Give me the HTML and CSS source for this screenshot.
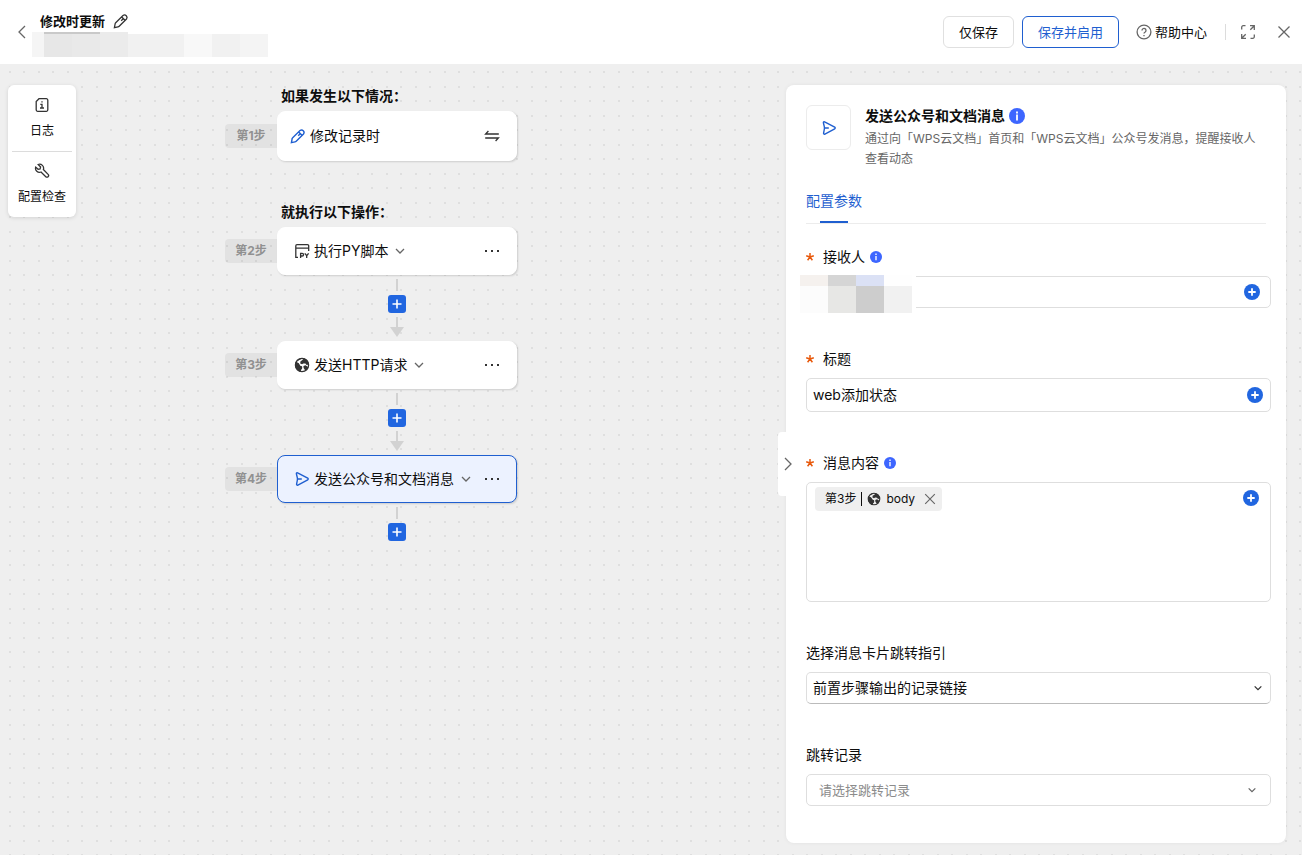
FILE: index.html
```
<!DOCTYPE html>
<html lang="zh-CN">

<head>
    <meta charset="utf-8">
    <title>修改时更新</title>
    <link rel="stylesheet" href="styles.css">
</head>

<body>
    <!-- icon sprite -->
    <svg class="sprite" aria-hidden="true">
        <symbol id="i-pencil" viewBox="0 0 16 16">
            <path d="M1.4 14.6l.7-3.6a2 2 0 0 1 .6-1.2l7.3-7.3a2.5 2.5 0 0 1 3.5 3.5l-7.3 7.3a2 2 0 0 1-1.2.6zM8.7 4l3.3 3.3M8.2 7.8l1.8-1.8" />
        </symbol>
        <symbol id="i-left" viewBox="0 0 16 16">
            <path d="M12 2L6 8l6 6" />
        </symbol>
        <symbol id="i-right" viewBox="0 0 16 16">
            <path d="M5 2l6 6-6 6" />
        </symbol>
        <symbol id="i-down" viewBox="0 0 12 12">
            <path d="M2 4l4 4 4-4" />
        </symbol>
        <symbol id="i-close" viewBox="0 0 16 16">
            <path d="M2.5 2.5l11 11M13.5 2.5l-11 11" />
        </symbol>
        <symbol id="i-help" viewBox="0 0 16 16">
            <circle cx="8" cy="8" r="6.9" />
            <path d="M6 6.4a2 2 0 1 1 3.2 1.6c-.8.5-1.2.8-1.2 1.6M8 11v1.2" />
        </symbol>
        <symbol id="i-expand" viewBox="0 0 16 16">
            <path d="M1.7 5.5V3.2a1.5 1.5 0 0 1 1.5-1.5h2.3M10 1.7h4.3V6M14.3 1.7l-4 4M14.3 10.5v2.3a1.5 1.5 0 0 1-1.5 1.5h-2.3M6 14.3H1.7V10M1.7 14.3l4-4" />
        </symbol>
        <symbol id="i-log" viewBox="0 0 16 16">
            <path d="M5 1.7h7.3a1.5 1.5 0 0 1 1.5 1.5v9.6a1.5 1.5 0 0 1-1.5 1.5H3.7a1.5 1.5 0 0 1-1.5-1.5V4.5zM6.3 7.3H8v3.6M6 11h4M8 4.2v1.3" />
        </symbol>
        <symbol id="i-wrench" viewBox="0 0 16 16">
            <path d="M4.2 1.5a4 4 0 0 1 5.2 5l4.7 4.9a1.6 1.6 0 0 1-2.3 2.3L7 9a4 4 0 0 1-5.3-4.9l2.4 2.2 2-.3.5-2z" />
        </symbol>
        <symbol id="i-swap" viewBox="0 0 16 16">
            <path d="M14.8 6H1.6l2.8-3M1.2 10h13.2l-2.8 3" />
        </symbol>
        <symbol id="i-py" viewBox="0 0 16 16">
            <path d="M4 14.3H1.8V2.9a1.2 1.2 0 0 1 1.2-1.2h10.5a1.2 1.2 0 0 1 1.2 1.2v5M1.8 5.2h12.9" />
            <path d="M6.6 15V10.3h1.6a1.3 1.3 0 0 1 0 2.7H6.6M10.8 10.3l1.9 2.4 1.9-2.4M12.7 12.7V15" />
        </symbol>
        <symbol id="i-globe" viewBox="0 0 16 16">
            <circle cx="8" cy="8" r="6.6" />
            <path class="land" d="M8.6 1.2A7 7 0 0 0 2 5l2.6 1.8 1.4 2 2 .6v2L6.8 13v1.7a7 7 0 0 1-5-9.8zM10 1.3a7 7 0 0 1 4.8 6.2L12.6 8l-1.2-1.4-2-.2L8 7.2 6.2 6.4l.2-2L8.4 3z" />
            <path class="land" d="M2 4.8l2.8 1.5 1.4 2.4 2 1v1.6l-1.4 1.6v2A7.2 7.2 0 0 1 2 4.8zM9.4 9l2-.8 2 1.2.8 1.6a7 7 0 0 1-2.8 2.8L9.6 11z" />
        </symbol>
        <symbol id="i-send" viewBox="0 0 16 16">
            <path d="M3.6 1.9L13.7 7.2a.9.9 0 0 1 0 1.6L3.9 14.1a.9.9 0 0 1-1.3-1L3.4 8.8V7.2L2.4 2.8a.8.8 0 0 1 1.2-.9zM3.4 8h4.4" />
        </symbol>
        <symbol id="i-dots" viewBox="0 0 16 16">
            <path class="solid" d="M1 7h2v2H1zM7 7h2v2H7zM13 7h2v2h-2z" />
        </symbol>
        <symbol id="i-plus" viewBox="0 0 18 18">
            <path d="M9 4.5v9M4.5 9h9" />
        </symbol>
        <symbol id="i-add" viewBox="0 0 16 16">
            <circle class="solid" cx="8" cy="8" r="8" />
            <path class="mark" d="M8 4.3v7.4M4.3 8h7.4" />
        </symbol>
        <symbol id="i-info" viewBox="0 0 16 16">
            <circle class="solid" cx="8" cy="8" r="8" />
            <path class="mark" d="M8 6.6v5.8M8 3.4v2" />
        </symbol>
        <symbol id="i-star" viewBox="0 0 10 10">
            <path d="M5 5V1M5 5l3.8-1.2M5 5l2.4 3.3M5 5L2.6 8.3M5 5L1.2 3.8" />
        </symbol>
    </svg>

    <header class="topbar">
        <button class="icon-btn back" type="button" aria-label="返回"><svg class="icon"><use href="#i-left" /></svg></button>
        <div class="heading">
            <div class="name">
                <h1>修改时更新</h1>
                <button class="icon-btn" type="button" aria-label="重命名"><svg class="icon dark"><use href="#i-pencil" /></svg></button>
            </div>
            <div class="blocks blocks-top">
                <i class="c1"></i><i class="c2"></i><i class="c3"></i><i class="c4"></i><i class="c5"></i><i class="c6"></i><i class="c5"></i><i class="c7"></i>
            </div>
        </div>
        <div class="actions">
            <button class="btn" type="button">仅保存</button>
            <button class="btn btn-primary" type="button">保存并启用</button>
            <a class="help" href="#"><svg class="icon"><use href="#i-help" /></svg>帮助中心</a>
            <span class="divider"></span>
            <button class="icon-btn" type="button" aria-label="全屏"><svg class="icon"><use href="#i-expand" /></svg></button>
            <button class="icon-btn close" type="button" aria-label="关闭"><svg class="icon"><use href="#i-close" /></svg></button>
        </div>
    </header>

    <main class="workspace">
        <nav class="tools">
            <button class="tool" type="button"><svg class="icon dark"><use href="#i-log" /></svg>日志</button>
            <button class="tool" type="button"><svg class="icon dark"><use href="#i-wrench" /></svg>配置检查</button>
        </nav>

        <section class="flow">
            <h2>如果发生以下情况：</h2>
            <div class="step">
                <span class="step-no">第1步</span>
                <div class="card card-trigger">
                    <svg class="icon blue"><use href="#i-pencil" /></svg>
                    <span>修改记录时</span>
                    <button class="icon-btn more" type="button" aria-label="切换"><svg class="icon dark"><use href="#i-swap" /></svg></button>
                </div>
            </div>

            <h2 class="second">就执行以下操作：</h2>
            <div class="step">
                <span class="step-no">第2步</span>
                <div class="card">
                    <svg class="icon dark"><use href="#i-py" /></svg>
                    <span>执行PY脚本</span>
                    <svg class="icon chevron"><use href="#i-down" /></svg>
                    <button class="icon-btn more" type="button" aria-label="更多"><svg class="icon dark"><use href="#i-dots" /></svg></button>
                </div>
            </div>
            <div class="link">
                <span class="line"></span>
                <button class="plus" type="button" aria-label="添加步骤"><svg><use href="#i-plus" /></svg></button>
                <span class="arrow"></span>
            </div>
            <div class="step">
                <span class="step-no">第3步</span>
                <div class="card">
                    <svg class="icon dark"><use href="#i-globe" /></svg>
                    <span>发送HTTP请求</span>
                    <svg class="icon chevron"><use href="#i-down" /></svg>
                    <button class="icon-btn more" type="button" aria-label="更多"><svg class="icon dark"><use href="#i-dots" /></svg></button>
                </div>
            </div>
            <div class="link">
                <span class="line"></span>
                <button class="plus" type="button" aria-label="添加步骤"><svg><use href="#i-plus" /></svg></button>
                <span class="arrow"></span>
            </div>
            <div class="step">
                <span class="step-no">第4步</span>
                <div class="card active">
                    <svg class="icon blue"><use href="#i-send" /></svg>
                    <span>发送公众号和文档消息</span>
                    <svg class="icon chevron"><use href="#i-down" /></svg>
                    <button class="icon-btn more" type="button" aria-label="更多"><svg class="icon dark"><use href="#i-dots" /></svg></button>
                </div>
            </div>
            <div class="link">
                <span class="line"></span>
                <button class="plus" type="button" aria-label="添加步骤"><svg><use href="#i-plus" /></svg></button>
            </div>
        </section>

        <aside class="panel">
            <button class="handle" type="button" aria-label="收起"><svg class="icon"><use href="#i-right" /></svg></button>

            <div class="panel-head">
                <div class="logo"><svg class="icon blue"><use href="#i-send" /></svg></div>
                <div>
                    <h3>发送公众号和文档消息<svg class="icon info"><use href="#i-info" /></svg></h3>
                    <p>通过向「WPS云文档」首页和「WPS云文档」公众号发消息，提醒接收人查看动态</p>
                </div>
            </div>

            <div class="tabs">
                <button class="tab" type="button">配置参数</button>
            </div>

            <form class="form">
                <div class="field">
                    <label for="receiver"><svg class="required"><use href="#i-star" /></svg>接收人<svg class="icon info small"><use href="#i-info" /></svg></label>
                    <div class="box box-receiver">
                        <input id="receiver" type="text">
                        <button class="icon-btn" type="button" aria-label="插入变量"><svg class="icon add"><use href="#i-add" /></svg></button>
                        <div class="blocks blocks-user">
                            <i class="u1"></i><i class="u2"></i><i class="u3"></i><i class="u4"></i>
                            <i class="u5"></i><i class="u6"></i><i class="u7"></i><i class="u8"></i>
                        </div>
                    </div>
                </div>

                <div class="field">
                    <label for="title"><svg class="required"><use href="#i-star" /></svg>标题</label>
                    <div class="box box-title">
                        <input id="title" type="text" value="web添加状态">
                        <button class="icon-btn" type="button" aria-label="插入变量"><svg class="icon add"><use href="#i-add" /></svg></button>
                    </div>
                </div>

                <div class="field">
                    <label for="content"><svg class="required"><use href="#i-star" /></svg>消息内容<svg class="icon info small"><use href="#i-info" /></svg></label>
                    <div class="box box-content">
                        <div class="tag">
                            <span>第3步</span>
                            <span class="bar"></span>
                            <svg class="icon dark globe"><use href="#i-globe" /></svg>
                            <span>body</span>
                            <button class="icon-btn" type="button" aria-label="移除"><svg class="icon"><use href="#i-close" /></svg></button>
                        </div>
                        <textarea id="content"></textarea>
                        <button class="icon-btn" type="button" aria-label="插入变量"><svg class="icon add"><use href="#i-add" /></svg></button>
                    </div>
                </div>

                <div class="field">
                    <label for="guide">选择消息卡片跳转指引</label>
                    <div class="select select-guide">
                        <select id="guide">
                            <option>前置步骤输出的记录链接</option>
                        </select>
                        <svg class="icon dark"><use href="#i-down" /></svg>
                    </div>
                </div>

                <div class="field">
                    <label for="record">跳转记录</label>
                    <div class="select select-record">
                        <select id="record">
                            <option>请选择跳转记录</option>
                        </select>
                        <svg class="icon"><use href="#i-down" /></svg>
                    </div>
                </div>
            </form>
        </aside>
    </main>
</body>

</html>
```
FILE: styles.css
```
* {
    box-sizing: border-box;
}

body {
    margin: 0;
    min-height: 100vh;
    display: flex;
    flex-direction: column;
    font-family: Inter, "Noto Sans CJK SC", sans-serif;
    font-size: 14px;
    line-height: 20px;
    color: #0d0d0d;
    background: #fff;
}

h1, h2, h3, p {
    margin: 0;
}

button, input, textarea, select {
    font: inherit;
    color: inherit;
    margin: 0;
    padding: 0;
    border: 0;
    background: none;
    outline: none;
}

button {
    cursor: pointer;
}

/* icons */
.sprite {
    position: absolute;
    width: 0;
    height: 0;
}

.icon {
    display: block;
    flex: none;
    width: 16px;
    height: 16px;
    fill: none;
    stroke: #666;
    stroke-width: 1.3;
    color: #666;
}

.icon.dark {
    stroke: #333;
    color: #333;
}

.icon.blue {
    stroke: #1f5fd0;
    color: #1f5fd0;
    stroke-width: 1.4;
}

.icon.info {
    color: #3d66ff;
}

.icon.info.small {
    width: 12px;
    height: 12px;
}

.icon.add {
    color: #2166e0;
}

.solid, .land {
    fill: currentColor;
    stroke: none;
}

.mark {
    stroke: #fff;
    stroke-width: 1.8;
}

.icon-btn {
    display: block;
    flex: none;
}

.blocks {
    display: grid;
}

/* top bar */
.topbar {
    height: 64px;
    display: flex;
    align-items: center;
    padding-right: 10px;
}

.back {
    padding: 0 3px 0 13px;
}

.heading {
    align-self: flex-start;
    padding-top: 10px;
}

.name {
    display: flex;
    align-items: center;
    gap: 8px;
    height: 22px;
    padding-left: 8px;
}

.name h1 {
    font-size: 13px;
    font-weight: 700;
}

.blocks-top {
    grid-template-columns: 12px 28px 28px 28px 56px 28px 28px 28px;
    height: 25px;
}

.c1 { background: #f5f5f5; }
.c2 { background: #e7e7e7; border-top: 2px solid #c9c9c9; }
.c3 { background: #e9e9e9; border-top: 2px solid #c9c9c9; }
.c4 { background: #ebebeb; }
.c5 { background: #f1f1f1; margin-top: 2px; }
.c6 { background: #f8f8f8; margin-top: 2px; }
.c7 { background: #f4f4f4; margin-top: 2px; }

.actions {
    margin-left: auto;
    display: flex;
    align-items: center;
    font-size: 13px;
}

.btn {
    height: 32px;
    padding: 0 15px;
    border: 1px solid #e0e0e0;
    border-radius: 6px;
}

.btn-primary {
    margin-left: 8px;
    border-color: #1f5fd0;
    color: #1f5fd0;
}

.help {
    display: flex;
    align-items: center;
    gap: 3px;
    margin-left: 17px;
    color: inherit;
    text-decoration: none;
}

.divider {
    width: 1px;
    height: 16px;
    margin: 0 14px 0 18px;
    background: #dcdcdc;
}

.close {
    margin-left: 20px;
}

/* canvas */
.workspace {
    flex: 1;
    display: flex;
    align-items: flex-start;
    padding: 21px 16px 12px 8px;
    background-color: #efefef;
    background-image:
        radial-gradient(circle at 1px 1px, #dfdfdf 1px, transparent 1px),
        radial-gradient(circle at 15px 1px, #dfdfdf 1px, transparent 1px),
        radial-gradient(circle at 1px 16px, #dfdfdf 1px, transparent 1px),
        radial-gradient(circle at 15px 16px, #dfdfdf 1px, transparent 1px);
    background-size: 29px 29px;
    background-position: 9px 7px;
}

.tools {
    width: 68px;
    padding: 0 4px;
    border-radius: 6px;
    background: #fff;
    box-shadow: 0 1px 4px rgba(0, 0, 0, 0.12);
}

.tool {
    display: flex;
    flex-direction: column;
    align-items: center;
    gap: 9px;
    width: 100%;
    height: 66px;
    padding-top: 12px;
    font-size: 12px;
    line-height: 18px;
}

.tool + .tool {
    border-top: 1px solid #dcdcdc;
    padding-top: 11px;
}

.flow {
    width: 292px;
    margin-left: 149px;
}

.flow h2 {
    margin-bottom: 5px;
    padding-left: 56px;
    font-size: 14px;
    line-height: 21px;
}

.flow .second {
    margin-top: 40px;
}

.step {
    display: flex;
    align-items: center;
}

.step-no {
    width: 52px;
    height: 24px;
    border-radius: 4px 0 0 4px;
    background: rgba(0, 0, 0, 0.05);
    color: #919191;
    font-size: 12px;
    font-weight: 700;
    line-height: 24px;
    text-align: center;
}

.card {
    flex: 1;
    display: flex;
    align-items: center;
    gap: 4px;
    height: 48px;
    padding: 0 16px;
    border: 1px solid #fff;
    border-radius: 8px;
    background: #fff;
    box-shadow: 1px 1px 2px rgba(0, 0, 0, 0.14);
}

.card-trigger {
    height: 50px;
    padding-left: 12px;
}

.card.active {
    border-color: #1f5fd0;
    background: #ecf2ff;
}

.card .chevron {
    width: 12px;
    height: 12px;
    margin-left: 2px;
}

.more {
    margin-left: auto;
}

.link {
    display: flex;
    flex-direction: column;
    align-items: center;
    gap: 4px;
    margin-left: 52px;
    padding: 4px 0;
}

.line {
    width: 2px;
    height: 12px;
    background: #d2d2d2;
}

.plus {
    width: 18px;
    height: 18px;
    border-radius: 3px;
    background: #2166e0;
}

.plus svg {
    display: block;
    width: 18px;
    height: 18px;
    stroke: #fff;
    stroke-width: 1.6;
}

.arrow::before {
    content: "";
    display: block;
    width: 2px;
    height: 10px;
    margin: 0 auto;
    background: #d2d2d2;
}

.arrow::after {
    content: "";
    display: block;
    border: 7px solid transparent;
    border-top: 10px solid #d2d2d2;
    border-bottom: 0;
}

/* settings panel */
.panel {
    position: relative;
    width: 500px;
    margin-left: auto;
    padding: 20px 15px 37px 20px;
    border-radius: 8px;
    background: #fff;
    box-shadow: 0 0 4px rgba(0, 0, 0, 0.06);
}

.handle {
    position: absolute;
    top: calc(50% - 32px);
    left: -8px;
    width: 16px;
    height: 64px;
    border-radius: 4px 0 0 4px;
    background: #fff;
}

.handle .icon {
    margin-left: 2px;
}

.panel-head {
    display: flex;
    align-items: flex-start;
    gap: 14px;
}

.logo {
    flex: none;
    display: grid;
    place-items: center;
    width: 45px;
    height: 45px;
    border: 1px solid #ececec;
    border-radius: 6px;
}

.panel-head h3 {
    display: flex;
    align-items: center;
    gap: 4px;
    font-size: 14px;
    line-height: 22px;
}

.panel-head p {
    margin: 2px 14px 0 0;
    color: #666;
    font-size: 12px;
}

.tabs {
    margin: 22px 5px 0 0;
    border-bottom: 1px solid #ececec;
}

.tab {
    display: block;
    color: #1f5fd0;
}

.tab::after {
    content: "";
    display: block;
    width: 28px;
    height: 2px;
    margin: 10px auto 0;
    background: #1f5fd0;
}

.form {
    display: flex;
    flex-direction: column;
    gap: 41px;
    margin-top: 23px;
}

.field label {
    display: flex;
    align-items: center;
    height: 20px;
    margin-bottom: 9px;
}

.field .info {
    margin-left: 5px;
}

.required {
    width: 10px;
    height: 10px;
    margin-right: 8px;
    margin-left: -1px;
    fill: none;
    stroke: #e8590c;
    stroke-width: 1.5;
}

.box {
    position: relative;
    display: flex;
    align-items: center;
    border: 1px solid #dedede;
    border-radius: 5px;
}

.box input {
    flex: 1;
    min-width: 0;
    padding-left: 6px;
}

.box-receiver {
    height: 32px;
    padding-right: 10px;
}

.box-title {
    height: 34px;
    padding-right: 7px;
}

.box-content {
    align-items: flex-start;
    height: 120px;
    padding: 4px 11px 4px 8px;
}

.box-content > .icon-btn {
    margin-top: 3px;
}

.box-content textarea {
    flex: 1;
    min-width: 0;
    height: 110px;
    resize: none;
}

.blocks-user {
    position: absolute;
    top: -2px;
    left: -7px;
    grid-template: 11px 27px / 28px 28px 28px 28px;
    padding-right: 4px;
    background: #fff;
}

.u1 { background: #f5f1ee; }
.u2 { background: #d5d5d5; }
.u3 { background: #dbe1f5; }
.u4 { background: #fefefe; }
.u5 { background: #fcfcfc; }
.u6 { background: #e7e7e5; }
.u7 { background: #cdcdcd; }
.u8 { background: #f1f1f1; }

.tag {
    display: flex;
    align-items: center;
    gap: 5px;
    height: 24px;
    padding: 0 5px 0 10px;
    border-radius: 4px;
    background: #efefef;
    font-size: 12px;
}

.tag .bar {
    width: 1px;
    height: 14px;
    background: #0d0d0d;
}

.tag .globe {
    width: 14px;
    height: 14px;
}

.tag .icon-btn {
    margin-left: 3px;
}

.tag .icon-btn .icon {
    width: 14px;
    height: 14px;
}

.select {
    position: relative;
}

.select select {
    display: block;
    width: 100%;
    height: 32px;
    appearance: none;
    border: 1px solid #dedede;
    border-radius: 5px;
}

.select .icon {
    position: absolute;
    top: 11px;
    right: 8px;
    width: 10px;
    height: 10px;
    stroke-width: 1.5;
    pointer-events: none;
}

.select-guide select {
    padding-left: 6px;
    border-bottom-color: #bbb;
}

.select-record select {
    padding-left: 12px;
    color: #8c8c8c;
    font-size: 13px;
}

.select-record .icon {
    right: 14px;
}
```
